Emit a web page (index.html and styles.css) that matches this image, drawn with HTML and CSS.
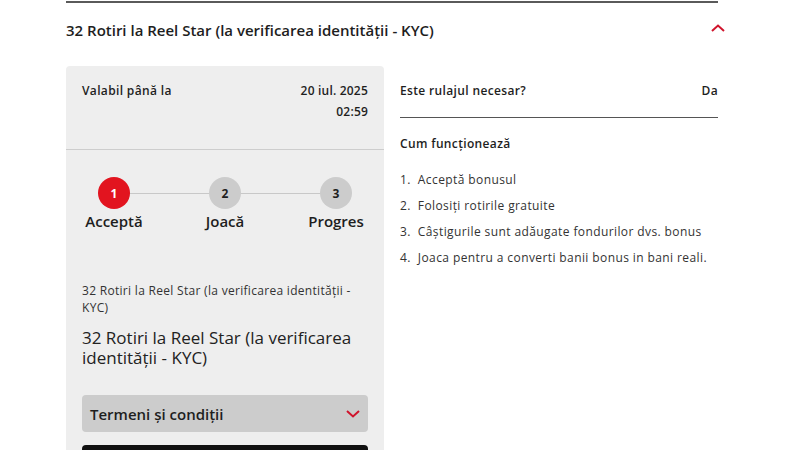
FILE: index.html
```html
<!DOCTYPE html>
<html lang="ro">
<head>
<meta charset="utf-8">
<link rel="stylesheet" href="styles.css">
</head>
<body>
<div class="wrap">
  <div class="header">
    <h2 class="title">32 Rotiri la Reel Star (la verificarea identității - KYC)</h2>
    <svg class="chev-up" width="14" height="8" viewBox="0 0 14 8"><path d="M1 7 L7 1.5 L13 7" fill="none" stroke="#d0142c" stroke-width="2"/></svg>
  </div>
  <div class="content">
    <div class="card">
      <div class="valid">
        <span class="label">Valabil până la</span>
        <span class="date">20 iul. 2025<br>02:59</span>
      </div>
      <div class="card-body">
        <div class="steps">
          <div class="step active"><span class="dot">1</span><span class="step-label">Acceptă</span></div>
          <div class="step"><span class="dot">2</span><span class="step-label">Joacă</span></div>
          <div class="step"><span class="dot">3</span><span class="step-label">Progres</span></div>
        </div>
        <p class="small">32 Rotiri la Reel Star (la verificarea identității - KYC)</p>
        <p class="big">32 Rotiri la Reel Star (la verificarea identității - KYC)</p>
        <div class="terms">
          <span>Termeni și condiții</span>
          <svg width="14" height="8" viewBox="0 0 14 8"><path d="M1 1 L7 6.5 L13 1" fill="none" stroke="#d0142c" stroke-width="2"/></svg>
        </div>
        <div class="btn"></div>
      </div>
    </div>
    <div class="info">
      <div class="row">
        <span class="label">Este rulajul necesar?</span>
        <span class="label">Da</span>
      </div>
      <h3 class="how">Cum funcționează</h3>
      <ol class="list">
        <li>1.&nbsp; Acceptă bonusul</li>
        <li>2.&nbsp; Folosiți rotirile gratuite</li>
        <li>3.&nbsp; Câștigurile sunt adăugate fondurilor dvs. bonus</li>
        <li>4.&nbsp; Joaca pentru a converti banii bonus in bani reali.</li>
      </ol>
    </div>
  </div>
</div>
</body>
</html>
```

FILE: styles.css
```css
* { box-sizing: border-box; }
body {
  margin: 0;
  background: #fff;
  font-family: "Open Sans", "Noto Sans", sans-serif;
  color: #1e1e1e;
}
.wrap {
  width: 652px;
  margin-left: 66px;
  padding-top: 1px;
}
.header {
  display: flex;
  align-items: center;
  justify-content: space-between;
  border-top: 2px solid #5a5a5a;
  padding: 17px 0 26px;
}
.title {
  margin: 0;
  font-size: 15px;
  font-weight: 600;
  line-height: 20px;
}
.chev-up { margin-right: -7px; margin-top: -5px; }
.content {
  display: grid;
  grid-template-columns: 1fr 1fr;
  gap: 16px;
}
.card {
  background: #eeeeee;
  border-radius: 4px 4px 0 0;
  height: 384px;
  overflow: hidden;
}
.valid {
  display: flex;
  justify-content: space-between;
  padding: 14px 16px 27px;
  border-bottom: 1px solid #cdcdcd;
  font-size: 12px;
  font-weight: 600;
  line-height: 21px;
}
.date { text-align: right; }
.card-body { padding: 27px 16px 0; }
.steps {
  display: flex;
  justify-content: space-between;
  position: relative;
}
.steps::before {
  content: "";
  position: absolute;
  left: 32px;
  right: 32px;
  top: 16px;
  border-top: 1px solid #c8c8c8;
}
.step {
  width: 64px;
  display: flex;
  flex-direction: column;
  align-items: center;
  position: relative;
}
.dot {
  width: 32px;
  height: 32px;
  border-radius: 50%;
  background: #cccccc;
  color: #1e1e1e;
  font-size: 12px;
  font-weight: 700;
  display: flex;
  align-items: center;
  justify-content: center;
}
.step.active .dot { background: #e2141f; color: #fff; }
.step-label {
  margin-top: 2px;
  font-size: 15px;
  font-weight: 600;
  line-height: 20px;
  white-space: nowrap;
}
.small {
  margin: 51px 0 0;
  font-size: 12px;
  line-height: 17px;
  letter-spacing: 0.3px;
  color: #333;
}
.big {
  margin: 12px 0 0;
  font-size: 17px;
  line-height: 19.5px;
  color: #222;
}
.terms {
  margin-top: 28px;
  height: 37px;
  background: #cccccc;
  border-radius: 4px;
  display: flex;
  align-items: center;
  justify-content: space-between;
  padding: 0 8px;
  font-size: 15px;
  font-weight: 600;
}
.btn {
  margin-top: 13px;
  height: 40px;
  background: #111;
  border-radius: 4px;
}
.info { padding-top: 14px; }
.row {
  display: flex;
  justify-content: space-between;
  padding-bottom: 16px;
  border-bottom: 1px solid #555;
}
.label {
  font-size: 12px;
  font-weight: 600;
  line-height: 21px;
  letter-spacing: 0.35px;
}
.date { letter-spacing: 0.2px; }
.how {
  margin: 16px 0 0;
  font-size: 12px;
  font-weight: 600;
  line-height: 20px;
  letter-spacing: 0.35px;
}
.list {
  list-style: none;
  margin: 13px 0 0;
  padding: 0;
  font-size: 12px;
  line-height: 26px;
  letter-spacing: 0.4px;
  color: #333;
}
```
